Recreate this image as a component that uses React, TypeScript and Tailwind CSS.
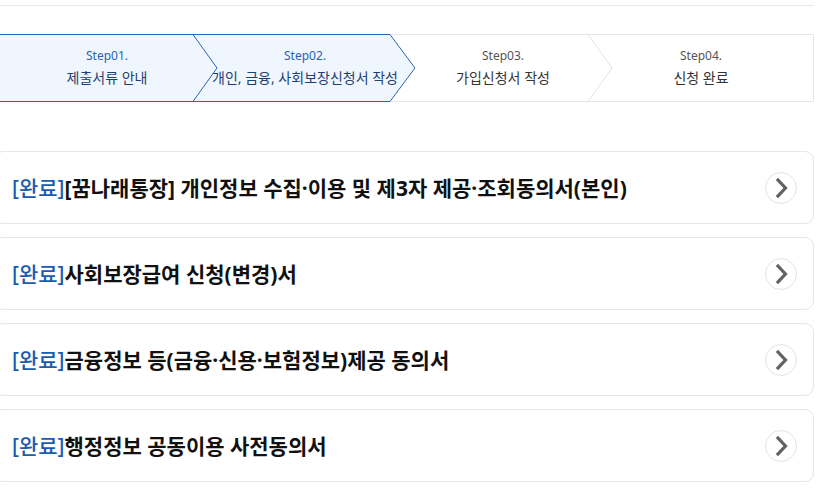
const steps = [
  { label: "Step01.", title: "제출서류 안내", active: true },
  { label: "Step02.", title: "개인, 금융, 사회보장신청서 작성", active: true },
  { label: "Step03.", title: "가입신청서 작성", active: false },
  { label: "Step04.", title: "신청 완료", active: false },
];

const docs = [
  "[꿈나래통장] 개인정보 수집·이용 및 제3자 제공·조회동의서(본인)",
  "사회보장급여 신청(변경)서",
  "금융정보 등(금융·신용·보험정보)제공 동의서",
  "행정정보 공동이용 사전동의서",
];

function StepBackground() {
  return (
    <svg
      className="absolute inset-0"
      width="820"
      height="68"
      viewBox="0 0 820 68"
      fill="none"
    >
      {/* frame */}
      <path d="M0 0.5H819.5V67.5H0" stroke="#e6e6e6" />
      {/* active area */}
      <path d="M0 0.5H396L421 34L396 67.5H0Z" fill="#eff6fe" />
      <path d="M0 0.5H396L421 34L396 67.5H0" stroke="#2b62b4" />
      <path d="M199 0.5L223 34L199 67.5" stroke="#2b62b4" />
      {/* inactive divider */}
      <path d="M594 0.5L618 34L594 67.5" stroke="#e2e2e2" />
    </svg>
  );
}

function ArrowButton() {
  return (
    <span className="flex h-[32px] w-[32px] shrink-0 items-center justify-center rounded-full border border-[#e4e4e4] bg-white">
      <svg width="14" height="20" viewBox="0 0 14 20" fill="none" className="ml-[2px]">
        <path
          d="M3 2L10.5 10L3 18"
          stroke="#626262"
          strokeWidth="3.2"
          strokeLinecap="square"
        />
      </svg>
    </span>
  );
}

export default function App() {
  return (
    <div
      className="h-[499px] w-[826px] overflow-hidden bg-white"
      style={{ fontFamily: '"Noto Sans", "Noto Sans CJK KR", sans-serif' }}
    >
      <div className="-ml-[6px] w-[820px]">
        {/* header edge */}
        <div className="h-[6px] border-b border-[#e8e8e8]" />

        {/* Stepper */}
        <div className="relative mt-[28px] h-[68px]">
          <StepBackground />
          <ol className="relative flex h-full pl-[14px]">
            {steps.map((s) => (
              <li
                key={s.label}
                className="flex w-[198px] flex-col items-center justify-center pb-[1px]"
              >
                <span
                  className={
                    s.active
                      ? "text-[12px] leading-[18px] text-[#2b62b4]"
                      : "text-[12px] leading-[18px] text-[#555]"
                  }
                >
                  {s.label}
                </span>
                <span
                  className={
                    s.active
                      ? "mt-[3px] whitespace-nowrap text-[14px] leading-[20px] text-[#1d3f72]"
                      : "mt-[3px] whitespace-nowrap text-[14px] leading-[20px] text-[#333]"
                  }
                >
                  {s.title}
                </span>
              </li>
            ))}
          </ol>
        </div>

        {/* Document list */}
        <ul className="mt-[49px] flex flex-col gap-[13px]">
          {docs.map((d) => (
            <li
              key={d}
              className="flex h-[73px] items-center justify-between rounded-[9px] border border-[#e6e6e6] pl-[17px] pr-[16px]"
            >
              <p className="text-[21px] leading-[28px] font-bold text-[#111]">
                <span className="font-medium text-[#1a5bb0]">[완료]</span>
                {d}
              </p>
              <ArrowButton />
            </li>
          ))}
        </ul>
      </div>
    </div>
  );
}
